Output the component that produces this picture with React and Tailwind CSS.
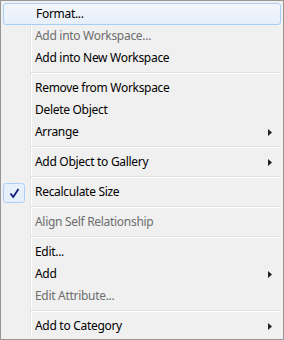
import React from 'react';

const items = [
  { label: 'Format...', hover: true },
  { label: 'Add into Workspace...', disabled: true },
  { label: 'Add into New Workspace' },
  { sep: true },
  { label: 'Remove from Workspace' },
  { label: 'Delete Object' },
  { label: 'Arrange', sub: true },
  { sep: true },
  { label: 'Add Object to Gallery', sub: true },
  { sep: true },
  { label: 'Recalculate Size', checked: true },
  { sep: true },
  { label: 'Align Self Relationship', disabled: true },
  { sep: true },
  { label: 'Edit...' },
  { label: 'Add', sub: true },
  { label: 'Edit Attribute...', disabled: true },
  { sep: true },
  { label: 'Add to Category', sub: true },
];

function Arrow() {
  return (
    <svg width="4" height="7" viewBox="0 0 4 7" className="shrink-0">
      <path d="M0 0 L4 3.5 L0 7 Z" fill="#222" />
    </svg>
  );
}

function Check() {
  return (
    <div className="absolute left-0 top-[2px] w-[22px] h-[20px] rounded-[3px] border border-[#aecff7] bg-[#e6f0fb] flex items-center justify-center">
      <svg width="11" height="11" viewBox="0 0 11 11">
        <path d="M1.5 5.5 L4.2 9 L9.5 1" fill="none" stroke="#101a78" strokeWidth="1.8" />
      </svg>
    </div>
  );
}

function Item({ item }) {
  if (item.sep) {
    return (
      <div className="h-[8px] flex items-center pl-[28px]">
        <div className="w-full h-[2px] border-t border-[#e0e0e0] border-b border-b-white" />
      </div>
    );
  }
  const base = 'relative h-[22px] flex items-center justify-between pl-[32px] pr-[9px] text-[12px] tracking-[-0.3px]';
  const hover = item.hover
    ? ' rounded-[3px] border border-[#aacff6] bg-[linear-gradient(#f3f7fc,#e7effa)] pl-[31px] pr-[8px]'
    : '';
  return (
    <div className={base + hover}>
      {item.checked && <Check />}
      <span className={item.disabled ? 'text-[#6d6d6d]' : 'text-black'}>{item.label}</span>
      {item.sub && <Arrow />}
    </div>
  );
}

export default function App() {
  return (
    <div
      className="relative w-[284px] h-[340px] border border-[#979797] bg-[#f0f0f0] p-[2px] overflow-hidden"
      style={{ fontFamily: '"Noto Sans", "Liberation Sans", sans-serif' }}
    >
      <div className="absolute left-[29px] top-[2px] bottom-[2px] w-[2px] border-l border-[#e2e3e3] border-r border-r-white" />
      <div className="relative flex flex-col">
        {items.map((it, i) => (
          <Item key={i} item={it} />
        ))}
      </div>
    </div>
  );
}
